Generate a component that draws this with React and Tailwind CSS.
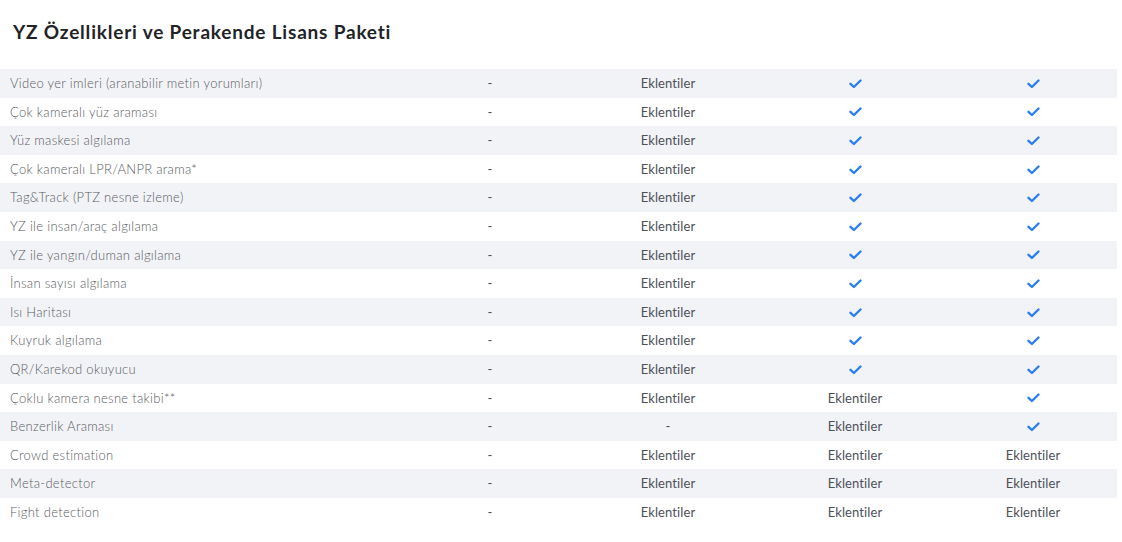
import React from "react";

const rows = [
  ["Video yer imleri (aranabilir metin yorumları)", "-", "E", "C", "C"],
  ["Çok kameralı yüz araması", "-", "E", "C", "C"],
  ["Yüz maskesi algılama", "-", "E", "C", "C"],
  ["Çok kameralı LPR/ANPR arama*", "-", "E", "C", "C"],
  ["Tag&Track (PTZ nesne izleme)", "-", "E", "C", "C"],
  ["YZ ile insan/araç algılama", "-", "E", "C", "C"],
  ["YZ ile yangın/duman algılama", "-", "E", "C", "C"],
  ["İnsan sayısı algılama", "-", "E", "C", "C"],
  ["Isı Haritası", "-", "E", "C", "C"],
  ["Kuyruk algılama", "-", "E", "C", "C"],
  ["QR/Karekod okuyucu", "-", "E", "C", "C"],
  ["Çoklu kamera nesne takibi**", "-", "E", "E", "C"],
  ["Benzerlik Araması", "-", "-", "E", "C"],
  ["Crowd estimation", "-", "E", "E", "E"],
  ["Meta-detector", "-", "E", "E", "E"],
  ["Fight detection", "-", "E", "E", "E"],
];

function Check() {
  return (
    <svg width="13" height="10" viewBox="0 0 13 10" className="block">
      <path d="M1.5 4.8 L4.9 8 L11.5 1.5" fill="none" stroke="#2b7ff2" strokeWidth="2.4" strokeLinecap="round" strokeLinejoin="round" />
    </svg>
  );
}

function Cell({ v }) {
  return (
    <div className="flex items-center justify-center pt-[1px] text-[13px] tracking-[0.1px] text-[#4d5058]">
      {v === "C" ? <Check /> : v === "E" ? "Eklentiler" : "-"}
    </div>
  );
}

export default function App() {
  return (
    <div className="w-[1122px] h-[542px] bg-white" style={{ fontFamily: "Lato, 'Open Sans', sans-serif" }}>
      <h1 className="pl-[13px] pt-[19px] h-[69px] text-[19px] font-bold tracking-[0.8px] text-[#222326] leading-[26px]">
        YZ Özellikleri ve Perakende Lisans Paketi
      </h1>
      <div className="w-[1117px]">
        {rows.map((r, i) => (
          <div
            key={i}
            className={`grid grid-cols-[405px_170px_186px_188px_1fr] h-[28.6px] ${i % 2 === 0 ? "bg-[#f2f3f7]" : "bg-white"}`}
          >
            <div className="flex items-center pl-[10px] pt-[1px] text-[13px] font-light tracking-[0.3px] text-[#5a5c63]">{r[0]}</div>
            <Cell v={r[1]} />
            <Cell v={r[2]} />
            <Cell v={r[3]} />
            <Cell v={r[4]} />
          </div>
        ))}
      </div>
    </div>
  );
}
